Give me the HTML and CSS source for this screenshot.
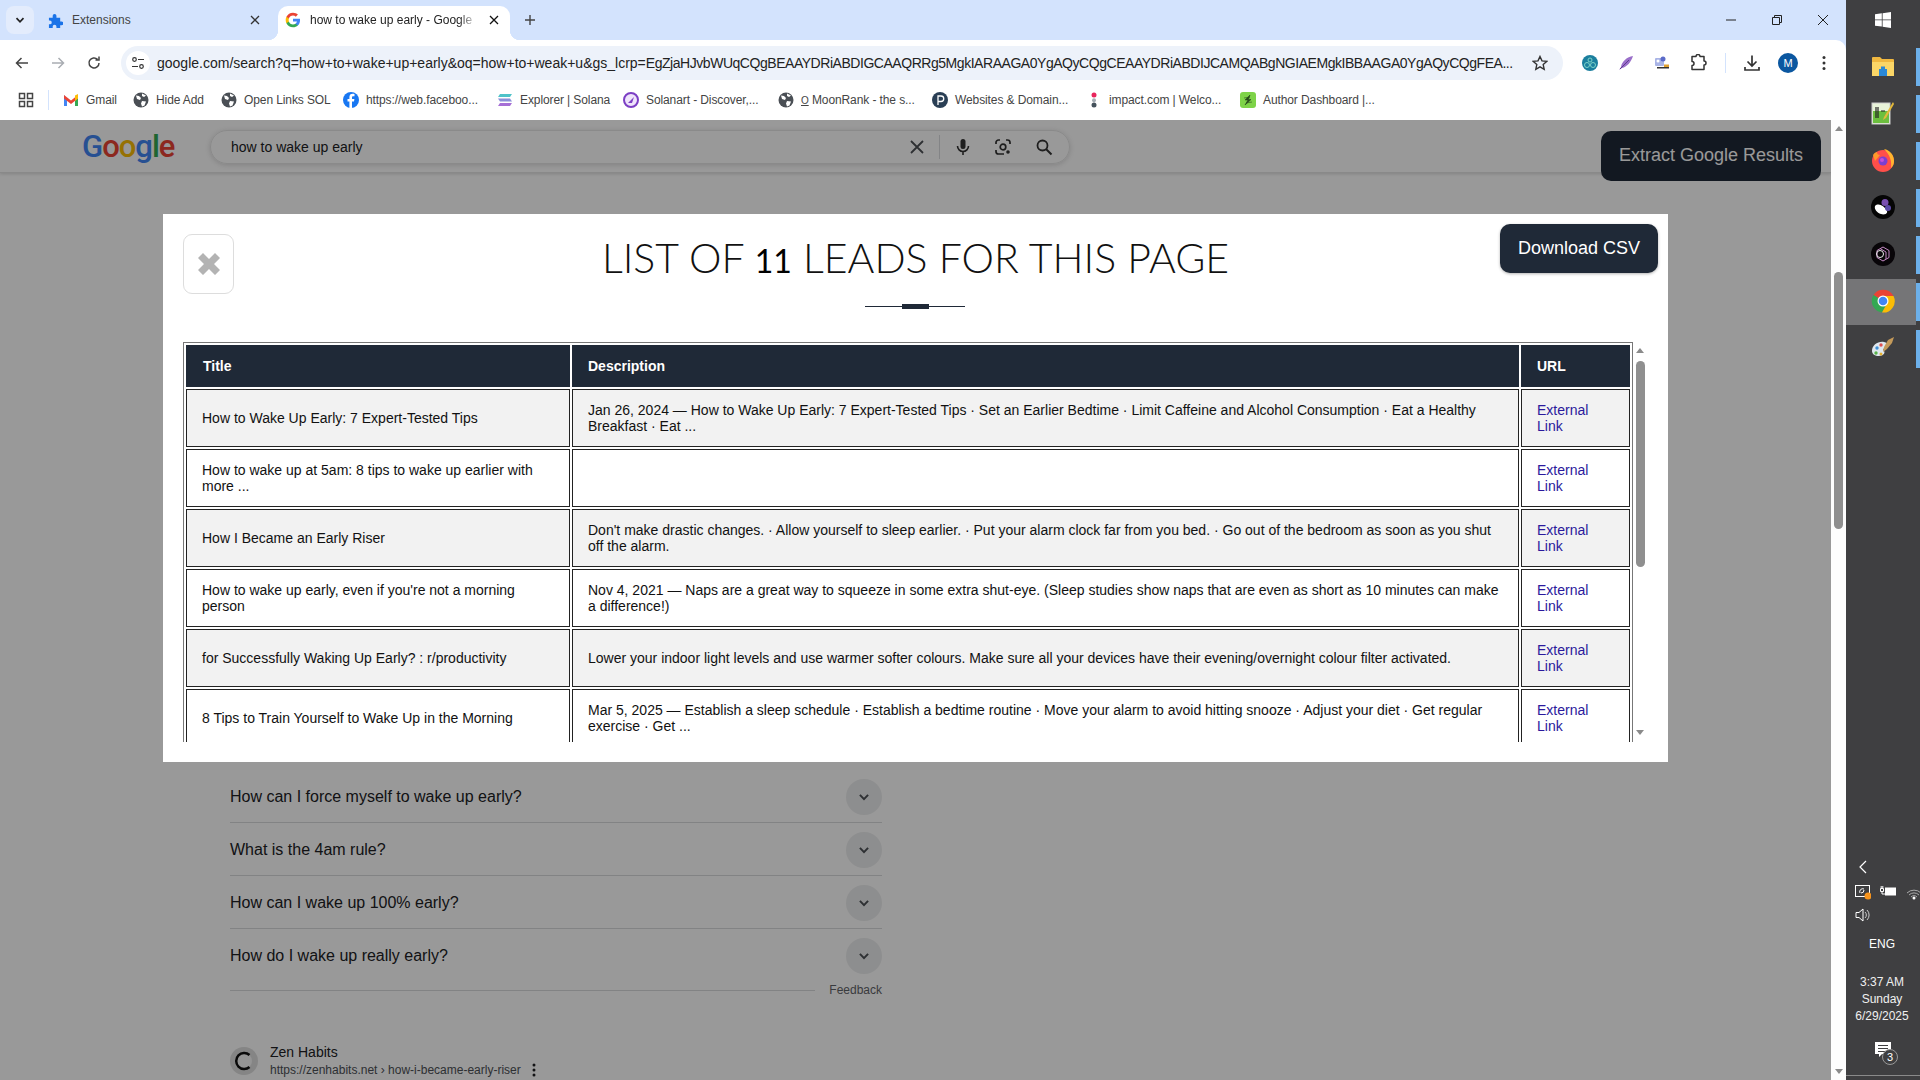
FILE: index.html
```html
<!DOCTYPE html>
<html>
<head>
    <meta charset="utf-8">
    <title>how to wake up early - Google Search</title>
    <link rel="stylesheet" href="styles.css">
</head>
<body>
    <svg class="defs" width="0" height="0">
        <symbol id="globe" viewBox="0 0 16 16">
            <circle cx="8" cy="8" r="7.500" fill="#4a4f55"/>
            <path d="M3 3.500l3 .5 2 2-1 2-3-1zM9 9l4 .5-1.500 4-2.500 1-1-3zM9 1.500l4 2-2 1.500-2-1z" fill="#fff"/>
        </symbol>
        <symbol id="g-color" viewBox="0 0 24 24">
            <path fill="#4285F4" d="M22.560 12.250c0-.78-.07-1.530-.2-2.250H12v4.260h5.920c-.26 1.370-1.040 2.530-2.210 3.310v2.770h3.570c2.080-1.920 3.280-4.740 3.280-8.090z"/>
            <path fill="#34A853" d="M12 23c2.970 0 5.460-.98 7.280-2.660l-3.570-2.770c-.98.66-2.230 1.060-3.710 1.060-2.860 0-5.290-1.930-6.160-4.530H2.180v2.840C3.990 20.530 7.700 23 12 23z"/>
            <path fill="#FBBC05" d="M5.840 14.090c-.22-.66-.35-1.360-.35-2.090s.13-1.430.35-2.090V7.070H2.180C1.430 8.550 1 10.220 1 12s.43 3.450 1.180 4.930l3.660-2.840z"/>
            <path fill="#EA4335" d="M12 5.380c1.620 0 3.060.56 4.210 1.640l3.150-3.150C17.450 2.090 14.970 1 12 1 7.700 1 3.990 3.470 2.180 7.070l3.660 2.840c.87-2.600 3.300-4.530 6.160-4.530z"/>
        </symbol>
        <symbol id="cross" viewBox="0 0 12 12">
            <path d="M2 2l8 8M10 2l-8 8" fill="none" stroke="currentColor" stroke-width="1.300"/>
        </symbol>
        <symbol id="chev" viewBox="0 0 12 12">
            <path d="M2.500 4.200L6 7.800l3.500-3.600" fill="none" stroke="currentColor" stroke-width="1.700"/>
        </symbol>
    </svg>

    <div class="browser">
        <!-- tabs -->
        <div class="tabstrip">
            <div class="tablist-btn"><svg width="12" height="12"><use href="#chev"/></svg></div>
            <div class="tab tab-other">
                <svg width="15" height="15" viewBox="0 0 16 16"><path d="M1 5h4V3a2 2 0 0 1 4 0v2h4v4h1.500a2 2 0 0 1 0 4H13v3H9v-1.500a2 2 0 0 0-4 0V16H1v-4h1a2 2 0 0 0 0-4H1z" fill="#1a73e8"/></svg>
                <span class="tab-title">Extensions</span>
                <svg class="tab-close" width="12" height="12"><use href="#cross"/></svg>
            </div>
            <div class="tab tab-active">
                <svg width="16" height="16"><use href="#g-color"/></svg>
                <span class="tab-title">how to wake up early - Google</span>
                <svg class="tab-close" width="12" height="12"><use href="#cross"/></svg>
            </div>
            <svg class="new-tab" width="14" height="14" viewBox="0 0 14 14"><path d="M7 2v10M2 7h10" stroke="#444" stroke-width="1.400"/></svg>
            <div class="win-controls">
                <div class="win-btn"><svg width="12" height="12" viewBox="0 0 12 12"><path d="M1 6h10" stroke="#222"/></svg></div>
                <div class="win-btn"><svg width="12" height="12" viewBox="0 0 12 12"><path d="M3.500 3V1.500h7v7H9M1.500 3.500h7v7h-7z" fill="none" stroke="#222"/></svg></div>
                <div class="win-btn"><svg width="12" height="12" viewBox="0 0 12 12"><path d="M1 1l10 10M11 1L1 11" stroke="#222"/></svg></div>
            </div>
        </div>

        <!-- address bar -->
        <div class="toolbar">
            <div class="tool"><svg width="16" height="16" viewBox="0 0 16 16"><path d="M14 8H3M7.500 3L2.500 8l5 5" fill="none" stroke="#444" stroke-width="1.500"/></svg></div>
            <div class="tool"><svg width="16" height="16" viewBox="0 0 16 16"><path d="M2 8h11M8.500 3l5 5-5 5" fill="none" stroke="#a9adb2" stroke-width="1.500"/></svg></div>
            <div class="tool"><svg width="16" height="16" viewBox="0 0 16 16"><path d="M13 8a5 5 0 1 1-1.500-3.600M13 1.500v3.500H9.500" fill="none" stroke="#444" stroke-width="1.500"/></svg></div>
            <div class="omnibox">
                <div class="site-info"><svg width="14" height="14" viewBox="0 0 14 14"><g fill="none" stroke="#333" stroke-width="1.200"><circle cx="3.500" cy="3.500" r="1.800"/><circle cx="10.500" cy="10.500" r="1.800"/><path d="M7 3.500h6M1 10.500h6"/></g></svg></div>
                <span class="url">google.com/search?q=how+to+wake+up+early&amp;oq=how+to+weak+u&amp;gs_lcrp=<span class="url-tail">EgZjaHJvbWUqCQgBEAAYDRiABDIGCAAQRRg5MgkIARAAGA0YgAQyCQgCEAAYDRiABDIJCAMQABgNGIAEMgkIBBAAGA0YgAQyCQgFEA...</span></span>
                <svg class="star" width="16" height="16" viewBox="0 0 16 16"><path d="M8 1.500l2 4.400 4.700.5-3.500 3.200 1 4.700L8 11.900l-4.200 2.400 1-4.700L1.300 6.400 6 5.900z" fill="none" stroke="#333" stroke-width="1.400"/></svg>
            </div>
            <div class="tool">
                <svg width="16" height="16" viewBox="0 0 16 16"><circle cx="8" cy="8" r="8" fill="#1b7f9e"/><g fill="none" stroke="#7fd3c8" stroke-width="1"><circle cx="8" cy="5" r="2"/><circle cx="5" cy="10" r="2.500"/><circle cx="11" cy="10" r="2.500"/></g></svg>
            </div>
            <div class="tool">
                <svg width="16" height="16" viewBox="0 0 16 16"><path d="M15 1C9 2 4 6 3 12l-2 3 3-2c5-1 9-6 11-12z" fill="#9a6fc9"/><path d="M2 14L11 5" stroke="#5f3b91"/></svg>
            </div>
            <div class="tool">
                <svg width="16" height="16" viewBox="0 0 16 16"><rect x="1" y="3" width="9" height="8" rx="1" fill="#a9b4e6"/><circle cx="9" cy="4" r="2.500" fill="#5b6bc9"/><circle cx="4" cy="6" r="1.500" fill="#fff"/><rect x="3" y="12" width="12" height="1.500" fill="#333"/><rect x="10" y="9.500" width="5" height="2.500" fill="#e0a030"/></svg>
            </div>
            <div class="tool">
                <svg width="18" height="18" viewBox="0 0 18 18"><path d="M3 2.500h4a2 2 0 0 1 4 0h4v4.500a2 2 0 0 1 0 4v4.500H3v-4a2 2 0 0 0 0-4z" fill="none" stroke="#333" stroke-width="1.500" stroke-linejoin="round"/></svg>
            </div>
            <div class="tool-sep"></div>
            <div class="tool">
                <svg width="18" height="18" viewBox="0 0 18 18"><path d="M9 1.500v10M4.500 7.500L9 12l4.500-4.500M2 13v3h14v-3" fill="none" stroke="#333" stroke-width="1.700"/></svg>
            </div>
            <div class="tool"><span class="avatar">M</span></div>
            <div class="tool">
                <svg width="4" height="16" viewBox="0 0 4 16"><circle cx="2" cy="2.500" r="1.500" fill="#333"/><circle cx="2" cy="8" r="1.500" fill="#333"/><circle cx="2" cy="13.500" r="1.500" fill="#333"/></svg>
            </div>
        </div>

        <!-- bookmarks -->
        <div class="bookmarks">
            <svg width="16" height="16" viewBox="0 0 16 16"><g fill="none" stroke="#444" stroke-width="1.500"><rect x="1.500" y="1.500" width="5" height="5"/><rect x="9.500" y="1.500" width="5" height="5"/><rect x="1.500" y="9.500" width="5" height="5"/><rect x="9.500" y="9.500" width="5" height="5"/></g></svg>
            <div class="bm-sep"></div>
            <div class="bm">
                <svg width="16" height="16" viewBox="0 0 16 16"><path d="M1 3v11h3V7z" fill="#4285f4"/><path d="M15 3v11h-3V7z" fill="#34a853"/><path d="M1 3l7 5.500L15 3v3.500L8 12 1 6.500z" fill="#ea4335"/><path d="M12 3.500L15 2v4.500l-3 2.500z" fill="#fbbc05"/></svg>
                <span>Gmail</span>
            </div>
            <div class="bm"><svg width="16" height="16"><use href="#globe"/></svg><span>Hide Add</span></div>
            <div class="bm"><svg width="16" height="16"><use href="#globe"/></svg><span>Open Links SOL</span></div>
            <div class="bm">
                <svg width="16" height="16" viewBox="0 0 16 16"><circle cx="8" cy="8" r="8" fill="#1877f2"/><path d="M9 16V9.500h2l.4-2.500H9V5.500c0-.8.3-1.300 1.400-1.300h1.100V2c-.6-.1-1.200-.2-1.900-.2-2 0-3.200 1.200-3.200 3.300V7H4.500v2.500h1.900V16z" fill="#fff"/></svg>
                <span>https://web.faceboo...</span>
            </div>
            <div class="bm">
                <svg width="16" height="16" viewBox="0 0 16 16"><path d="M3 2h12l-2 3H1z" fill="#4fc3c9"/><path d="M1 6.500h12l2 3H3z" fill="#8a8fd8"/><path d="M3 11h12l-2 3H1z" fill="#a66fd6"/></svg>
                <span>Explorer | Solana</span>
            </div>
            <div class="bm">
                <svg width="16" height="16" viewBox="0 0 16 16"><circle cx="8" cy="8" r="7" fill="#efe4fb" stroke="#7c3fc4" stroke-width="2"/><path d="M5 11l6-6-2 6z" fill="#7c3fc4"/></svg>
                <span>Solanart - Discover,...</span>
            </div>
            <div class="bm"><svg width="16" height="16"><use href="#globe"/></svg><span><u class="moon-mark">O</u> MoonRank - the s...</span></div>
            <div class="bm">
                <svg width="16" height="16" viewBox="0 0 16 16"><circle cx="8" cy="8" r="8" fill="#2a3f55"/><path d="M6 13V4h3a2.500 2.500 0 0 1 0 5.500H6" fill="none" stroke="#fff" stroke-width="1.300"/></svg>
                <span>Websites &amp; Domain...</span>
            </div>
            <div class="bm">
                <svg width="16" height="16" viewBox="0 0 16 16"><circle cx="8" cy="3" r="2.500" fill="#e8255c"/><circle cx="8" cy="8.300" r="2" fill="#a5adb3"/><circle cx="8" cy="13" r="2.500" fill="#45525c"/></svg>
                <span>impact.com | Welco...</span>
            </div>
            <div class="bm">
                <svg width="16" height="16" viewBox="0 0 16 16"><rect width="16" height="16" rx="3" fill="#7ed348"/><path d="M10 3L5 8h3l-3 5 6-5.500H8.500zM4 6l6-1M6 11l6-1" fill="#27491b" stroke="#27491b" stroke-width=".6"/></svg>
                <span>Author Dashboard |...</span>
            </div>
        </div>

        <div class="viewport">
            <div class="page">
                <div class="g-header">
                    <div class="g-logo"><span class="lb">G</span><span class="lr">o</span><span class="ly">o</span><span class="lb">g</span><span class="lg">l</span><span class="lr">e</span></div>
                    <div class="g-search">
                        <span class="g-query">how to wake up early</span>
                        <svg width="18" height="18" viewBox="0 0 18 18"><path d="M3 3l12 12M15 3L3 15" stroke="#4d5156" stroke-width="1.800"/></svg>
                        <div class="g-sep"></div>
                        <svg width="18" height="18" viewBox="0 0 18 18"><rect x="6.500" y="1" width="5" height="10" rx="2.500" fill="#333"/><path d="M3.500 8a5.500 5.500 0 0 0 11 0M9 13.500V17" fill="none" stroke="#333" stroke-width="1.600"/></svg>
                        <svg width="18" height="18" viewBox="0 0 18 18"><path d="M2 6V4.500A2.500 2.500 0 0 1 4.500 2H6M12 2h1.500A2.500 2.500 0 0 1 16 4.500V6M2 12v1.500A2.500 2.500 0 0 0 4.500 16H10" fill="none" stroke="#333" stroke-width="1.700"/><circle cx="9" cy="9" r="2.800" fill="none" stroke="#333" stroke-width="1.700"/><circle cx="14" cy="14" r="1.800" fill="#333"/></svg>
                        <svg width="18" height="18" viewBox="0 0 18 18"><circle cx="7.500" cy="7.500" r="5" fill="none" stroke="#333" stroke-width="1.800"/><path d="M11 11l5.500 5.500" stroke="#333" stroke-width="2"/></svg>
                    </div>
                </div>

                <div class="faq">
                    <div class="faq-row"><span>How can I force myself to wake up early?</span><div class="faq-chev"><svg width="14" height="14"><use href="#chev"/></svg></div></div>
                    <div class="faq-row"><span>What is the 4am rule?</span><div class="faq-chev"><svg width="14" height="14"><use href="#chev"/></svg></div></div>
                    <div class="faq-row"><span>How can I wake up 100% early?</span><div class="faq-chev"><svg width="14" height="14"><use href="#chev"/></svg></div></div>
                    <div class="faq-row faq-last"><span>How do I wake up really early?</span><div class="faq-chev"><svg width="14" height="14"><use href="#chev"/></svg></div></div>
                    <div class="feedback"><div class="feedback-line"></div><span>Feedback</span></div>
                </div>

                <div class="result">
                    <svg width="28" height="28" viewBox="0 0 28 28"><circle cx="14" cy="14" r="14" fill="#dedede"/><circle cx="14" cy="14" r="8" fill="#f7f7f7"/><path d="M19.500 8A8 8 0 1 0 19.500 20" fill="none" stroke="#111" stroke-width="2.500"/></svg>
                    <div class="result-text">
                        <div class="result-site">Zen Habits</div>
                        <div class="result-url">https://zenhabits.net › how-i-became-early-riser <svg width="4" height="14" viewBox="0 0 4 14"><circle cx="2" cy="2" r="1.500" fill="#202124"/><circle cx="2" cy="7" r="1.500" fill="#202124"/><circle cx="2" cy="12" r="1.500" fill="#202124"/></svg></div>
                    </div>
                </div>

                <button class="extract-btn">Extract Google Results</button>

                <div class="overlay"></div>

                <div class="modal">
                    <div class="modal-head">
                        <div class="close-btn"><svg width="24" height="24" viewBox="0 0 24 24"><path d="M6 1l6 6 6-6 5 5-6 6 6 6-5 5-6-6-6 6-5-5 6-6-6-6z" fill="#b3b3b3"/></svg></div>
                        <div class="modal-title">
                            <h2>LIST OF <span class="count">11</span> LEADS FOR THIS PAGE</h2>
                            <div class="divider"><div class="divider-mid"></div></div>
                        </div>
                        <button class="csv-btn">Download CSV</button>
                    </div>
                    <div class="table-wrap">
                        <div class="table-scroll">
                            <table>
                                <colgroup><col class="col-title"><col class="col-desc"><col class="col-url"></colgroup>
                                <thead>
                                    <tr><th>Title</th><th>Description</th><th>URL</th></tr>
                                </thead>
                                <tbody>
                                    <tr><td>How to Wake Up Early: 7 Expert-Tested Tips</td><td>Jan 26, 2024 — How to Wake Up Early: 7 Expert-Tested Tips · Set an Earlier Bedtime · Limit Caffeine and Alcohol Consumption · Eat a Healthy Breakfast · Eat ...</td><td><a href="#">External Link</a></td></tr>
                                    <tr><td>How to wake up at 5am: 8 tips to wake up earlier with more ...</td><td></td><td><a href="#">External Link</a></td></tr>
                                    <tr><td>How I Became an Early Riser</td><td>Don't make drastic changes. · Allow yourself to sleep earlier. · Put your alarm clock far from you bed. · Go out of the bedroom as soon as you shut off the alarm.</td><td><a href="#">External Link</a></td></tr>
                                    <tr><td>How to wake up early, even if you're not a morning person</td><td>Nov 4, 2021 — Naps are a great way to squeeze in some extra shut-eye. (Sleep studies show naps that are even as short as 10 minutes can make a difference!)</td><td><a href="#">External Link</a></td></tr>
                                    <tr><td>for Successfully Waking Up Early? : r/productivity</td><td>Lower your indoor light levels and use warmer softer colours. Make sure all your devices have their evening/overnight colour filter activated.</td><td><a href="#">External Link</a></td></tr>
                                    <tr><td>8 Tips to Train Yourself to Wake Up in the Morning</td><td>Mar 5, 2025 — Establish a sleep schedule · Establish a bedtime routine · Move your alarm to avoid hitting snooze · Adjust your diet · Get regular exercise · Get ...</td><td><a href="#">External Link</a></td></tr>
                                </tbody>
                            </table>
                        </div>
                        <div class="scrollbar inner-bar">
                            <div class="arrow-up"></div>
                            <div class="thumb"></div>
                            <div class="arrow-down"></div>
                        </div>
                    </div>
                </div>
            </div>
            <div class="scrollbar page-bar">
                <div class="arrow-up"></div>
                <div class="thumb"></div>
                <div class="arrow-down"></div>
            </div>
        </div>
    </div>

    <!-- windows taskbar, docked on the right -->
    <div class="taskbar">
        <div class="start">
            <svg width="16" height="16" viewBox="0 0 16 16"><path d="M0 2.300l6.800-1v6.200H0zM7.600 1.200L16 0v7.500H7.600zM0 8.300h6.800v6.300L0 13.700zM7.600 8.300H16V16l-8.400-1.200z" fill="#fff"/></svg>
        </div>
        <div class="task-item">
            <div class="task-icon"><svg width="24" height="22" viewBox="0 0 24 22"><path d="M1 3a1 1 0 0 1 1-1h7l2 2h11a1 1 0 0 1 1 1v15a1 1 0 0 1-1 1H2a1 1 0 0 1-1-1z" fill="#f0b840"/><rect x="1" y="7" width="22" height="14" fill="#fbd667"/><path d="M8 14h8v7H8z" fill="#2a88d6"/><rect x="10" y="11.500" width="4" height="3" fill="#2a88d6"/></svg></div>
            <div class="task-bar"></div>
        </div>
        <div class="task-item">
            <div class="task-icon"><svg width="24" height="24" viewBox="0 0 24 24"><rect x="1" y="2" width="18" height="21" fill="#e8f3d8" stroke="#ccc"/><rect x="2" y="10" width="16" height="12" fill="#6cbf3f"/><path d="M5 6v11M7 6v11M10 10h4" stroke="#222" stroke-width="1.200"/><path d="M22 1L13 16l-1 3 3-2L23 3z" fill="#e4b93a"/></svg></div>
            <div class="task-bar"></div>
        </div>
        <div class="task-item">
            <div class="task-icon"><svg width="24" height="24" viewBox="0 0 24 24"><circle cx="12" cy="13" r="11" fill="#ff4f4a"/><path d="M13 1c6 1 10 6 10 12 0 3-1 5-3 7 1-7-1-13-7-19z" fill="#ffb52e"/><path d="M2 7c1-2 3-3 4-3 0 2 1 3 3 3l-5 6z" fill="#ff9a2b"/><circle cx="12" cy="13" r="4.500" fill="#7b3fd0"/><circle cx="11" cy="12" r="2" fill="#c44fd8"/></svg></div>
            <div class="task-bar"></div>
        </div>
        <div class="task-item">
            <div class="task-icon"><svg width="24" height="24" viewBox="0 0 24 24"><circle cx="12" cy="12" r="12" fill="#050505"/><path d="M4 11c3-3 9-1 12 5 1 3-3 4-6 3-4-1-7-5-6-8z" fill="#fff"/><circle cx="14" cy="7.500" r="3.500" fill="#7a4fb0"/><circle cx="17" cy="13" r="3" fill="#5d4aa8"/></svg></div>
            <div class="task-bar"></div>
        </div>
        <div class="task-item">
            <div class="task-icon"><svg width="24" height="24" viewBox="0 0 24 24"><circle cx="12" cy="12" r="12" fill="#080508"/><g fill="none" stroke="#c68ac6" stroke-width="1"><path d="M12 5l6 3.500v7L12 19l-6-3.500v-7z"/><path d="M9 6.500l6 3.500v7"/></g><circle cx="9" cy="12" r="3.500" fill="none" stroke="#eee"/></svg></div>
            <div class="task-bar"></div>
        </div>
        <div class="task-item task-current">
            <div class="task-icon"><svg width="24" height="24" viewBox="0 0 24 24"><path d="M12 12L2.500 6A11.500 11.500 0 0 1 22.500 7H12z" fill="#ea4335"/><path d="M12 12l-9.500-6A11.500 11.500 0 0 0 11 23.500l5-9z" fill="#34a853"/><path d="M12 12l4 2.500-5 9A11.500 11.500 0 0 0 22.500 7H12z" fill="#fbbc05"/><circle cx="12" cy="12" r="5.500" fill="#fff"/><circle cx="12" cy="12" r="4.300" fill="#4285f4"/></svg></div>
            <div class="task-bar"></div>
        </div>
        <div class="task-item">
            <div class="task-icon"><svg width="24" height="24" viewBox="0 0 24 24"><path d="M1 15c0-6 6-10 12-9 5 1 5 5 1 6-2 .5-2 2-1 3 1.500 2-1 5-5 5-4 0-7-2-7-5z" fill="#dfe7ee"/><circle cx="6" cy="12" r="1.700" fill="#3f8fd6"/><circle cx="10" cy="9" r="1.700" fill="#e05050"/><circle cx="5" cy="17" r="1.700" fill="#59b34a"/><circle cx="10" cy="18" r="1.500" fill="#e5b030"/><path d="M23 1l-6 3-4 7-1 5 4-3 5-6z" fill="#c49a5a"/></svg></div>
            <div class="task-bar"></div>
        </div>

        <div class="tray">
            <svg class="tray-chevron" width="10" height="16" viewBox="0 0 10 16"><path d="M8 2L2 8l6 6" fill="none" stroke="#fff" stroke-width="1.200"/></svg>
            <div class="tray-icons">
                <span class="tray-slot">
                    <svg width="16" height="16" viewBox="0 0 16 16"><rect x=".5" y="1.500" width="14" height="11" fill="none" stroke="#fff"/><path d="M5 9a3 3 0 0 1 4-4M9 6a3 3 0 0 1-3 3" fill="none" stroke="#fff"/><circle cx="13" cy="12" r="3.500" fill="#f7941d"/></svg>
                </span>
                <span class="tray-slot">
                    <svg width="17" height="16" viewBox="0 0 17 16"><rect x="5" y="3.500" width="11" height="8" fill="#fff"/><path d="M.5 4.500h3v3h-3zM1.200 2v2.500M2.800 2v2.500M2 7.500V10h3" fill="none" stroke="#fff"/></svg>
                </span>
                <span class="tray-slot">
                    <svg width="16" height="16" viewBox="0 0 16 16"><g fill="none" stroke="#aaa"><path d="M1 9a10 10 0 0 1 14 0M3 11a7 7 0 0 1 10 0"/><path d="M5 13a4 4 0 0 1 6 0"/></g><circle cx="8" cy="14" r="1.500" fill="#fff"/></svg>
                </span>
            </div>
            <svg class="tray-sound" width="16" height="16" viewBox="0 0 16 16"><path d="M1 5.500h3L8 2v12L4 10.500H1z" fill="none" stroke="#fff"/><path d="M10 5a4 4 0 0 1 0 6M12 3a7 7 0 0 1 0 10" fill="none" stroke="#ccc"/></svg>
            <div class="tray-lang">ENG</div>
            <div class="tray-clock">
                <div>3:37 AM</div>
                <div>Sunday</div>
                <div>6/29/2025</div>
            </div>
            <div class="tray-notify">
                <svg width="18" height="16" viewBox="0 0 18 16"><path d="M0 0h16v12H7l-3 3v-3H0z" fill="#fff"/><path d="M3 3.500h10M3 6.500h10M3 9.500h7" stroke="#3f3f41"/></svg>
                <span class="notify-badge">3</span>
            </div>
        </div>
    </div>
</body>
</html>
```

FILE: styles.css
```css
* {
    box-sizing: border-box;
}

html, body {
    margin: 0;
    height: 100%;
}

body {
    display: flex;
    width: 1920px;
    height: 1080px;
    overflow: hidden;
    font-family: "Liberation Sans", Arial, sans-serif;
    background-color: #3f3f41;
}

.defs {
    position: absolute;
}

svg {
    display: block;
    flex: none;
}

.browser {
    width: 1846px;
    display: flex;
    flex-direction: column;
    background-color: #d3e3fd;
}

/* tabs */
.tabstrip {
    height: 40px;
    display: flex;
    align-items: flex-end;
    padding-left: 6px;
}

.tablist-btn {
    width: 28px;
    height: 28px;
    margin-bottom: 6px;
    border-radius: 8px;
    background-color: #e3ecfc;
    color: #222;
    display: flex;
    align-items: center;
    justify-content: center;
}

.tab {
    height: 34px;
    display: flex;
    align-items: center;
    font-size: 12px;
    padding-bottom: 6px;
}

.tab-other {
    width: 244px;
    padding-left: 14px;
    gap: 9px;
    color: #444;
}

.tab-active {
    width: 232px;
    padding-left: 7px;
    gap: 9px;
    background-color: #fff;
    border-radius: 10px 10px 0 0;
    color: #222;
    position: relative;
}

.tab-active::before,
.tab-active::after {
    content: "";
    position: absolute;
    bottom: 0;
    width: 10px;
    height: 10px;
}

.tab-active::before {
    left: -10px;
    background: radial-gradient(circle at 0 0, transparent 10px, #fff 10.500px);
}

.tab-active::after {
    right: -10px;
    background: radial-gradient(circle at 100% 0, transparent 10px, #fff 10.500px);
}

.tab-other .tab-title {
    width: 168px;
}

.tab-active .tab-title {
    width: 162px;
    white-space: nowrap;
    -webkit-mask-image: linear-gradient(to right, #000 92%, rgba(0, 0, 0, .3));
    mask-image: linear-gradient(to right, #000 92%, rgba(0, 0, 0, .3));
}

.tab-close {
    color: #333;
}

.tab-active .tab-close {
    margin-left: 7px;
    color: #111;
}

.new-tab {
    margin: 0 0 13px 13px;
}

.win-controls {
    margin-left: auto;
    height: 40px;
    display: flex;
}

.win-btn {
    width: 46px;
    display: flex;
    align-items: center;
    justify-content: center;
}

/* address bar */
.toolbar {
    height: 40px;
    background-color: #fff;
    border-radius: 0 10px 0 0;
    padding: 6px 0 0 8px;
    display: flex;
    align-items: center;
    gap: 8px;
}

.tool {
    width: 28px;
    height: 28px;
    flex: none;
    display: flex;
    align-items: center;
    justify-content: center;
}

.tool-sep {
    width: 10px;
    height: 20px;
    background: linear-gradient(#d3e3fd, #d3e3fd) center / 1px 100% no-repeat;
}

.omnibox {
    width: 1442px;
    height: 34px;
    margin: 0 5px;
    border-radius: 17px;
    background-color: #edf2fa;
    display: flex;
    align-items: center;
    padding-left: 5px;
}

.site-info {
    width: 24px;
    height: 24px;
    border-radius: 50%;
    background-color: #fff;
    display: flex;
    align-items: center;
    justify-content: center;
    flex: none;
}

.url {
    margin-left: 7px;
    width: 1355px;
    font-size: 14px;
    color: #222;
    white-space: nowrap;
}

.url-tail {
    letter-spacing: -.46px;
}

.star {
    margin-left: 20px;
}

.avatar {
    width: 20px;
    height: 20px;
    border-radius: 50%;
    background-color: #0b57a0;
    color: #fff;
    font-size: 11px;
    display: flex;
    align-items: center;
    justify-content: center;
}

/* bookmarks */
.bookmarks {
    height: 40px;
    background-color: #fff;
    padding-left: 18px;
    display: grid;
    grid-template-columns: 30px 15px 70px 88px 122px 154px 126px 155px 154px 154px 154px auto;
    align-items: center;
    font-size: 12px;
    letter-spacing: -.1px;
    color: #444;
}

.bm-sep {
    width: 1px;
    height: 20px;
    background-color: #d3e3fd;
}

.bm {
    display: flex;
    align-items: center;
    gap: 7px;
    white-space: nowrap;
}

.moon-mark {
    font-size: 10px;
}

/* google page, dimmed by the overlay */
.viewport {
    flex: 1;
    display: flex;
    min-height: 0;
}

.page {
    flex: 1;
    position: relative;
    overflow: hidden;
    background-color: #fff;
}

.overlay {
    position: absolute;
    inset: 0;
    background-color: rgba(0, 0, 0, .4);
}

.g-header {
    height: 53px;
    padding: 11px 0 0 82px;
    display: flex;
    align-items: flex-start;
    gap: 38px;
    border-bottom: 1px solid #e4e4e4;
    box-shadow: 0 1px 3px rgba(0, 0, 0, .15);
}

.g-logo {
    width: 90px;
    height: 34px;
    font-family: Roboto, sans-serif;
    font-size: 31px;
    line-height: 32px;
    letter-spacing: -1px;
    font-weight: 500;
}

.lb { color: #4285f4; }
.lr { color: #ea4335; }
.ly { color: #fbbc05; }
.lg { color: #34a853; }

.g-search {
    width: 860px;
    height: 34px;
    margin-top: -1px;
    border: 1px solid #e6e6e6;
    border-radius: 17px;
    box-shadow: 0 1px 5px rgba(64, 60, 67, .2);
    padding: 0 16px 0 20px;
    display: flex;
    align-items: center;
    font-size: 14px;
    color: #202124;
}

.g-query {
    width: 677px;
    flex: none;
}

.g-sep {
    width: 1px;
    height: 24px;
    margin: 0 14px 0 13px;
    background-color: #dadce0;
}

.g-search svg:nth-of-type(3) {
    margin-left: 22px;
}

.g-search svg:nth-of-type(4) {
    margin-left: 23px;
}

.faq {
    width: 652px;
    margin: 597px 0 0 230px;
}

.faq-row {
    height: 53px;
    padding-top: 2px;
    display: flex;
    align-items: center;
    justify-content: space-between;
    border-bottom: 1px solid #d9dadc;
    font-size: 16px;
    color: #202124;
}

.faq-last {
    border-bottom: 0;
    height: 60px;
    padding: 0 0 7px;
}

.faq-chev {
    width: 36px;
    height: 36px;
    border-radius: 50%;
    background-color: #ecedee;
    color: #4d5156;
    display: flex;
    align-items: center;
    justify-content: center;
}

.feedback {
    display: flex;
    align-items: center;
    gap: 14px;
    height: 12px;
    margin-top: -5px;
    font-size: 12px;
    color: #5f6368;
}

.feedback-line {
    flex: 1;
    height: 1px;
    background-color: #d9dadc;
}

.result {
    margin: 47px 0 0 230px;
    display: flex;
    align-items: center;
    gap: 12px;
}

.result-site {
    font-size: 14px;
    line-height: 18px;
    color: #202124;
}

.result-url {
    display: flex;
    align-items: center;
    gap: 11px;
    font-size: 12px;
    line-height: 18px;
    color: #4d5156;
}

.extract-btn {
    position: absolute;
    top: 11px;
    left: 1601px;
    width: 220px;
    height: 50px;
    padding-bottom: 3px;
    border: 0;
    border-radius: 10px;
    background-color: #1f2937;
    color: #fff;
    font-family: inherit;
    font-size: 18px;
}

/* leads popup */
.modal {
    position: absolute;
    top: 94px;
    left: 163px;
    width: 1505px;
    height: 548px;
    background-color: #fff;
    padding: 10px 10px 0;
}

.modal-head {
    height: 118px;
    display: grid;
    grid-template-columns: 1fr auto 1fr;
}

.close-btn {
    width: 51px;
    height: 60px;
    margin: 10px 0 0 10px;
    border: 1px solid #ddd;
    border-radius: 9px;
    display: flex;
    align-items: center;
    justify-content: center;
}

.modal-title {
    display: flex;
    flex-direction: column;
    align-items: center;
}

.modal-title h2 {
    margin: 10px 0 0;
    font-family: Lato, sans-serif;
    font-weight: 300;
    font-size: 41px;
    line-height: 48px;
    color: #111;
    white-space: nowrap;
}

.count {
    font-weight: 400;
    font-size: 32px;
    line-height: 1;
    color: #000;
}

.divider {
    width: 100px;
    height: 5px;
    margin-top: 22px;
    display: flex;
    justify-content: center;
    background: linear-gradient(#1f2937, #1f2937) center / 100% 1px no-repeat;
}

.divider-mid {
    width: 27px;
    background-color: #1f2937;
}

.csv-btn {
    justify-self: end;
    width: 158px;
    height: 49px;
    border: 0;
    border-radius: 10px;
    background-color: #1f2937;
    color: #fff;
    font-family: inherit;
    font-size: 18px;
    box-shadow: 0 1px 3px rgba(0, 0, 0, .3);
}

.table-wrap {
    display: flex;
    margin-left: 10px;
}

.table-scroll {
    width: 1450px;
    height: 400px;
    overflow: hidden;
}

table {
    width: 1450px;
    table-layout: fixed;
    border: 1px solid #777;
    border-spacing: 2px;
    font-size: 14px;
    line-height: 16px;
}

.col-title { width: 384px; }
.col-desc { width: 947px; }
.col-url { width: 109px; }

th, td {
    padding: 12px 17px 12px 15px;
    border: 1px solid #222;
    text-align: left;
    color: #111;
}

th {
    background-color: #1f2937;
    border-color: #1f2937;
    color: #fff;
}

th:first-child {
    padding-left: 16px;
}

tbody tr:nth-child(odd) td {
    background-color: #f2f2f2;
}

td a {
    color: #2b1a9c;
    text-decoration: none;
}

/* scrollbars */
.scrollbar {
    display: flex;
    flex-direction: column;
    align-items: center;
    background-color: #fff;
}

.inner-bar {
    width: 17px;
    height: 400px;
    padding: 6px 3px 7px 0;
}

.page-bar {
    width: 15px;
    padding: 6px 0;
    background-color: #fdfdfd;
}

.thumb {
    width: 9px;
    border-radius: 5px;
    background-color: #8f8f8f;
}

.inner-bar .thumb {
    height: 206px;
    margin-top: 8px;
}

.page-bar .thumb {
    height: 257px;
    margin-top: 141px;
}

.arrow-up,
.arrow-down {
    width: 0;
    height: 0;
    border-left: 4.500px solid transparent;
    border-right: 4.500px solid transparent;
}

.arrow-up {
    border-bottom: 5px solid #8a8a8a;
}

.arrow-down {
    margin-top: auto;
    border-top: 5px solid #8a8a8a;
}

/* taskbar */
.taskbar {
    width: 74px;
    height: 1080px;
    background-color: #3f3f41;
    display: flex;
    flex-direction: column;
    color: #fff;
    font-size: 12px;
}

.start {
    height: 40px;
    margin-bottom: 3px;
    display: flex;
    align-items: center;
    justify-content: center;
}

.task-item {
    height: 47px;
    display: flex;
    align-items: center;
}

.task-icon {
    width: 70px;
    height: 46px;
    padding: 0 0 2px 3px;
    display: flex;
    align-items: center;
    justify-content: center;
}

.task-current .task-icon {
    background-color: #757577;
}

.task-bar {
    width: 4px;
    height: 38px;
    background-color: #6cb0ea;
}

.tray {
    margin-top: auto;
    height: 222px;
    padding-top: 5px;
    border-bottom: 1px solid #8a8a8a;
    margin-bottom: 4px;
    display: flex;
    flex-direction: column;
}

.tray-chevron {
    margin-left: 12px;
}

.tray-icons {
    display: flex;
    gap: 9px;
    margin: 9px 0 0 9px;
    overflow: hidden;
    width: 65px;
}

.tray-sound {
    margin: 7px 0 0 9px;
}

.tray-lang {
    margin-top: 13px;
    padding-right: 2px;
    text-align: center;
    line-height: 16px;
}

.tray-clock {
    margin-top: 22px;
    padding-right: 2px;
    text-align: center;
    line-height: 17px;
    color: #f0f0f0;
}

.tray-notify {
    margin: 17px 0 0 29px;
    position: relative;
}

.notify-badge {
    position: absolute;
    left: 7px;
    top: 7px;
    width: 16px;
    height: 16px;
    border: 1px solid #999;
    border-radius: 50%;
    background-color: #3f3f41;
    font-size: 11px;
    line-height: 14px;
    text-align: center;
}
```
